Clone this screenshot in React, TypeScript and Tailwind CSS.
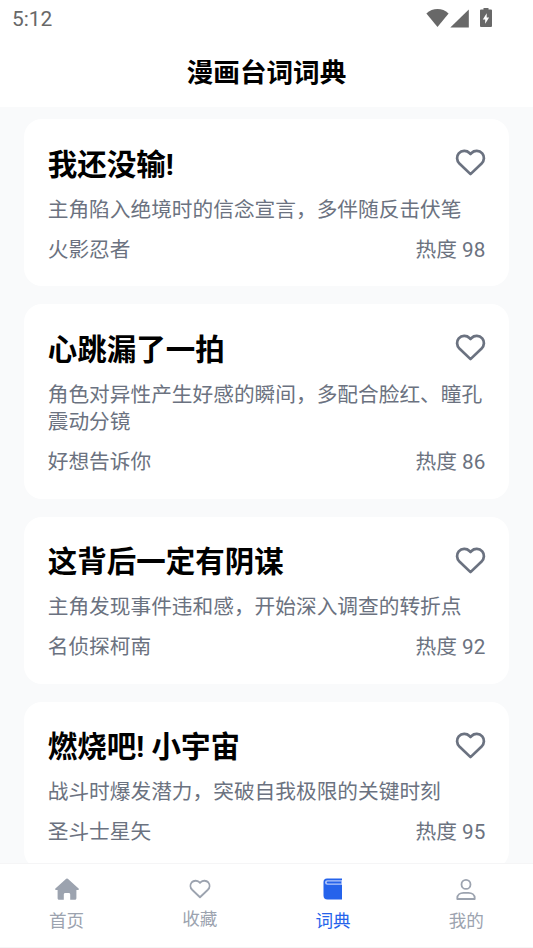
import { useState } from 'react';

type Quote = {
  id: number;
  title: string;
  desc: string;
  source: string;
  heat: number;
};

const quotes: Quote[] = [
  { id: 1, title: '我还没输!', desc: '主角陷入绝境时的信念宣言，多伴随反击伏笔', source: '火影忍者', heat: 98 },
  { id: 2, title: '心跳漏了一拍', desc: '角色对异性产生好感的瞬间，多配合脸红、瞳孔震动分镜', source: '好想告诉你', heat: 86 },
  { id: 3, title: '这背后一定有阴谋', desc: '主角发现事件违和感，开始深入调查的转折点', source: '名侦探柯南', heat: 92 },
  { id: 4, title: '燃烧吧! 小宇宙', desc: '战斗时爆发潜力，突破自我极限的关键时刻', source: '圣斗士星矢', heat: 95 },
];

const HEART =
  'M12 21 L3.4 12.8 C1.2 10.5 1 7.1 2.9 4.9 C5.1 2.5 9 2.4 11.2 4.6 L12 5.4 L12.8 4.6 C15 2.4 18.9 2.5 21.1 4.9 C23 7.1 22.8 10.5 20.6 12.8 Z';

function HeartIcon({ className, stroke }: { className: string; stroke: number }) {
  return (
    <svg viewBox="0 0 24 24" className={className} fill="none" stroke="currentColor" strokeWidth={stroke} strokeLinejoin="round">
      <path d={HEART} />
    </svg>
  );
}

function HomeIcon() {
  return (
    <svg viewBox="0 0 24 22" className="h-[22px] w-6" fill="currentColor">
      <path d="M11.2.8a1.2 1.2 0 0 1 1.6 0l10.8 9.8c.5.5.2 1.3-.5 1.3H21.4v8.4c0 .9-.6 1.5-1.5 1.5h-4.7v-5.4c0-.9-.6-1.5-1.4-1.5h-3.6c-.8 0-1.4.6-1.4 1.5v5.4H4.1c-.9 0-1.5-.6-1.5-1.5v-8.4H.9c-.7 0-1-.8-.5-1.3z" />
    </svg>
  );
}

function BookIcon() {
  return (
    <svg viewBox="0 0 20 22" className="h-[22px] w-5">
      <path fill="currentColor" d="M4 .5h15v1.6h-.5v4.6h.5v14.8H4.5a4 4 0 0 1-4-4V4A3.5 3.5 0 0 1 4 .5z" />
      <path fill="#b5c9fa" d="M4.2 2.3H19v4.4H4.2a2.2 2.2 0 0 1 0-4.4z" />
      <path fill="currentColor" d="M4.7 3.5h13.5v2H4.7a1 1 0 0 1 0-2z" />
    </svg>
  );
}

function UserIcon() {
  return (
    <svg viewBox="0 0 20 22" className="h-[22px] w-5" fill="none" stroke="currentColor" strokeWidth="1.8" strokeLinejoin="round">
      <circle cx="10" cy="6.4" r="4.5" />
      <path d="M1.3 21v-1c0-3.3 2.9-5.2 6.2-5.2h5c3.3 0 6.2 1.9 6.2 5.2v1z" />
    </svg>
  );
}

function StatusBar() {
  return (
    <div className="flex h-9 items-center justify-between pl-3 pr-[41px] text-[#686868]">
      <span className="text-[20.9px] leading-9 pt-[2px]">5:12</span>
      <div className="flex items-center">
        <svg viewBox="0 0 23 19" className="h-[19px] w-[23px]" fill="currentColor">
          <path d="M11.5 18 .4 4.5C3.6 1.5 7.4.1 11.5.1S19.4 1.5 22.6 4.5z" />
        </svg>
        <svg viewBox="0 0 19 19" className="ml-[1px] mr-[11px] h-[19px] w-[19px]" fill="currentColor">
          <path d="M18.8.4v18H.3z" />
        </svg>
        <svg viewBox="0 0 12 20" className="h-5 w-3" fill="currentColor">
          <path fillRule="evenodd" d="M3.5 0h5v1.5H11a1 1 0 0 1 1 1v15.6a1 1 0 0 1-1 1H1a1 1 0 0 1-1-1V2.5a1 1 0 0 1 1-1h2.5zM6.7 5.2 2.8 11.5h2.4v4.2L9.1 9.5H6.7z" />
        </svg>
      </div>
    </div>
  );
}

function QuoteCard({ quote, liked, onLike }: { quote: Quote; liked: boolean; onLike: () => void }) {
  return (
    <div className="rounded-[18px] bg-white px-[23.7px] pt-6 pb-[22px]">
      <div className="flex h-[41px] items-center justify-between">
        <h2 className="pt-[3px] text-[29.5px] font-bold leading-[41px] text-black">{quote.title}</h2>
        <button onClick={onLike} className={liked ? '-mr-px pb-[2px] text-red-500' : '-mr-px pb-[2px] text-[#6b7280]'}>
          <HeartIcon className="h-[31px] w-[31px]" stroke={2.1} />
        </button>
      </div>
      <p className="mt-[12.5px] text-[20.7px] leading-[27.5px] text-[#6b7280]">{quote.desc}</p>
      <div className="mt-[12.5px] flex justify-between text-[20.7px] leading-[27.5px] text-[#6b7280]">
        <span>{quote.source}</span>
        <span>热度 {quote.heat}</span>
      </div>
    </div>
  );
}

const tabs = [
  { key: 'home', label: '首页', icon: <HomeIcon />, gap: 'mt-[9px]' },
  { key: 'fav', label: '收藏', icon: <HeartIcon className="h-[22px] w-[22px]" stroke={2} />, gap: 'mt-[7px]' },
  { key: 'dict', label: '词典', icon: <BookIcon />, gap: 'mt-[9px]' },
  { key: 'me', label: '我的', icon: <UserIcon />, gap: 'mt-[9px]' },
];

export default function App() {
  const [active, setActive] = useState('dict');
  const [liked, setLiked] = useState<number[]>([]);

  const toggleLike = (id: number) => {
    setLiked(prev => (prev.includes(id) ? prev.filter(x => x !== id) : [...prev, id]));
  };

  return (
    <div className="flex h-screen flex-col overflow-hidden bg-gray-50 font-[Roboto,'Noto_Sans_CJK_SC',sans-serif]">
      <header className="h-[107px] shrink-0 bg-white">
        <StatusBar />
        <h1 className="text-center text-[26.6px] font-bold leading-[73px] text-black">漫画台词词典</h1>
      </header>

      <main className="flex min-h-0 flex-1 flex-col gap-[18px] overflow-hidden px-6 pt-3">
        {quotes.map(q => (
          <QuoteCard key={q.id} quote={q} liked={liked.includes(q.id)} onLike={() => toggleLike(q.id)} />
        ))}
      </main>

      <nav className="flex h-[85px] shrink-0 border-y border-[#f5f5f6] bg-white">
        {tabs.map(tab => (
          <button
            key={tab.key}
            onClick={() => setActive(tab.key)}
            className={`flex flex-1 flex-col items-center pt-[14px] ${active === tab.key ? 'text-[#2563eb]' : 'text-[#9ca3af]'}`}
          >
            {tab.icon}
            <span className={`text-[17.6px] leading-6 ${tab.gap}`}>{tab.label}</span>
          </button>
        ))}
      </nav>
    </div>
  );
}
